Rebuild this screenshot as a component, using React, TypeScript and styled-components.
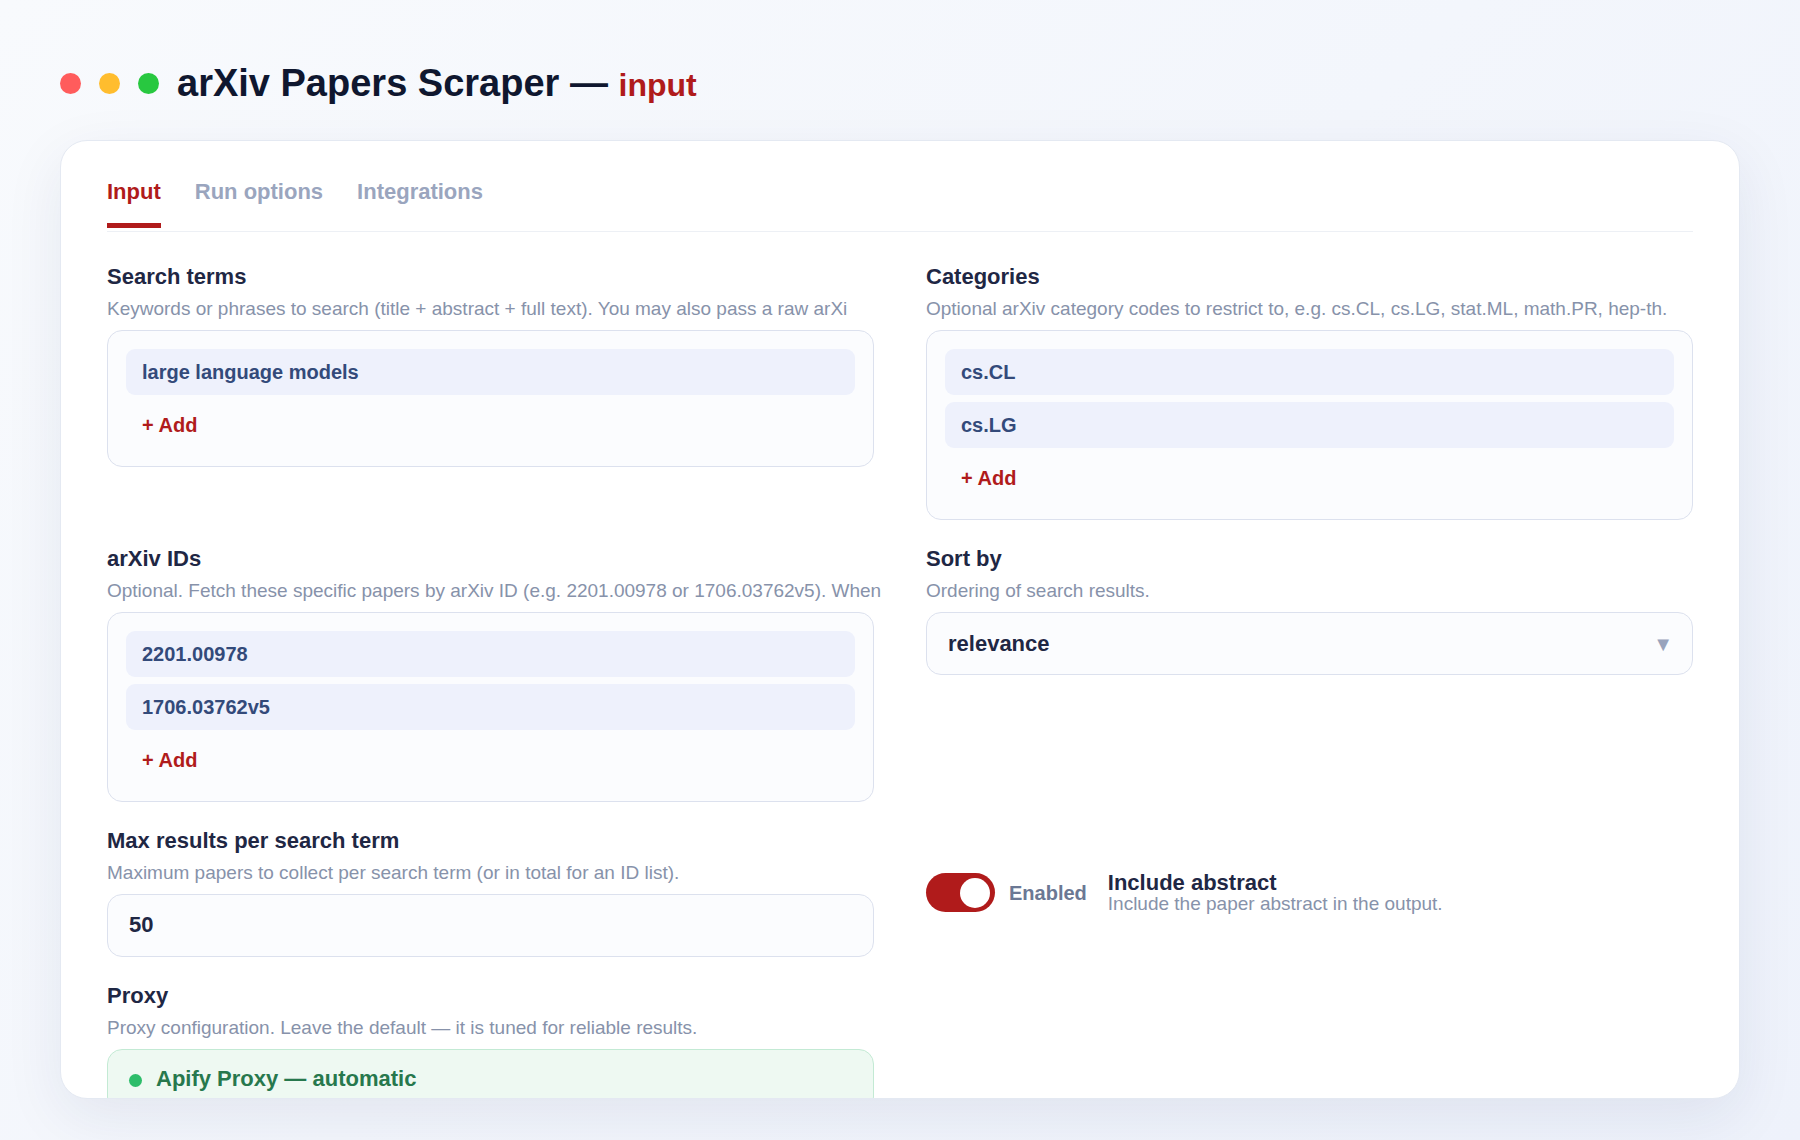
import React, { useState } from "react";
import styled, { createGlobalStyle, css } from "styled-components";

const GlobalStyle = createGlobalStyle`
  *, *::before, *::after { box-sizing: border-box; }
  body {
    margin: 0;
    font-family: "Liberation Sans", Arial, Helvetica, sans-serif;
    color: #1f2744;
  }
  button, input, select { font-family: inherit; margin: 0; }
`;

const Page = styled.div`
  height: 100vh;
  padding: 62px 60px 41px;
  display: flex;
  flex-direction: column;
  gap: 36px;
  background: linear-gradient(135deg, #f8fafd 0%, #eef2fb 100%);
`;

const Header = styled.header`
  display: flex;
  align-items: center;
  gap: 18px;
`;

const Dot = styled.span<{ $color: string; $size: number }>`
  flex: none;
  width: ${(p) => p.$size}px;
  height: ${(p) => p.$size}px;
  border-radius: 50%;
  background: ${(p) => p.$color};
`;

const Title = styled.h1`
  margin: 0;
  font-size: 38px;
  line-height: 42px;
  font-weight: 700;
  color: #0f172f;
`;

const TitleAccent = styled.span`
  font-size: 32px;
  line-height: 32px;
  color: #b01b1b;
`;

const Card = styled.main`
  flex: 1;
  min-height: 0;
  overflow: hidden;
  padding: 38px 46px 0;
  background: #fff;
  border: 1px solid #e4e9f2;
  border-radius: 27px;
  box-shadow: 0 18px 60px rgba(30, 41, 90, 0.08);
`;

const Tabs = styled.div`
  display: flex;
  gap: 34px;
  padding-bottom: 3px;
  border-bottom: 1px solid #edf0f5;
`;

const Tab = styled.button<{ $active?: boolean }>`
  padding: 0 0 18px;
  border: 0;
  border-bottom: 5px solid ${(p) => (p.$active ? "#b01b1b" : "transparent")};
  background: none;
  font-size: 22px;
  line-height: 26px;
  font-weight: 700;
  color: ${(p) => (p.$active ? "#b01b1b" : "#9aa5be")};
  cursor: pointer;
`;

const Form = styled.form`
  margin-top: 32px;
  display: grid;
  grid-template-columns: repeat(2, minmax(0, 1fr));
  gap: 26px 52px;
`;

const Field = styled.div`
  min-width: 0;
`;

const labelText = css`
  display: block;
  font-size: 22px;
  line-height: 26px;
  font-weight: 700;
  color: #1f2744;
`;

const Label = styled.label`
  ${labelText}
`;

const GroupLabel = styled.div`
  ${labelText}
`;

const Hint = styled.p`
  margin: 8px 0 10px;
  font-size: 19px;
  line-height: 22px;
  color: #8792aa;
  white-space: nowrap;
`;

const surface = css`
  border: 1px solid #dce1ee;
  border-radius: 15px;
  background: #fbfcfe;
`;

const List = styled.div`
  ${surface}
  display: flex;
  flex-direction: column;
  align-items: flex-start;
  gap: 7px;
  padding: 18px;
`;

const ListItem = styled.input`
  width: 100%;
  height: 46px;
  padding: 0 16px;
  border: 0;
  border-radius: 9px;
  background: #eef1fc;
  font-size: 20px;
  font-weight: 700;
  color: #334a7a;
`;

const AddButton = styled.button`
  height: 46px;
  padding: 0 16px;
  border: 0;
  background: none;
  font-size: 20px;
  font-weight: 700;
  color: #b01b1b;
  cursor: pointer;
`;

const ValueInput = styled.input`
  ${surface}
  display: block;
  width: 100%;
  height: 63px;
  padding: 0 21px 2px;
  font-size: 22px;
  font-weight: 700;
  color: #1f2744;
`;

const SelectBox = styled.div`
  ${surface}
  display: grid;
  align-items: center;
  height: 63px;
  overflow: hidden;
`;

const Select = styled.select`
  grid-area: 1 / 1;
  appearance: none;
  width: 100%;
  height: 100%;
  padding: 0 48px 0 21px;
  border: 0;
  background: none;
  font-size: 22px;
  font-weight: 700;
  color: #1f2744;
`;

const Caret = styled.span`
  grid-area: 1 / 1;
  justify-self: end;
  padding-right: 19px;
  font-size: 20px;
  line-height: 22px;
  color: #98a3bc;
  pointer-events: none;
`;

const ToggleRow = styled.div`
  display: flex;
  align-items: center;
`;

const Switch = styled.input`
  appearance: none;
  flex: none;
  display: flex;
  align-items: center;
  width: 69px;
  height: 39px;
  padding: 0 5px;
  border-radius: 20px;
  background: #c5ccda;
  cursor: pointer;

  &::before {
    content: "";
    width: 30px;
    height: 30px;
    border-radius: 50%;
    background: #fff;
  }

  &:checked {
    justify-content: flex-end;
    background: #b01b1b;
  }
`;

const SwitchState = styled.span`
  margin: 0 21px 0 14px;
  font-size: 20px;
  line-height: 22px;
  font-weight: 700;
  color: #6b7894;
`;

const ToggleLabel = styled.label`
  ${labelText}
  line-height: 22px;
`;

const ToggleHint = styled(Hint)`
  margin: 0;
  line-height: 20px;
`;

const ProxyBox = styled.div`
  display: flex;
  align-items: center;
  gap: 14px;
  height: 63px;
  padding: 0 21px;
  border: 1px solid #c3ead4;
  border-radius: 15px;
  background: #eef9f2;
`;

const ProxyText = styled.span`
  padding-bottom: 3px;
  font-size: 22px;
  line-height: 26px;
  font-weight: 700;
  color: #27784d;
`;

function ListField({ id, label, hint, values }: { id: string; label: string; hint: string; values: string[] }) {
  const [items, setItems] = useState(values);
  return (
    <Field role="group" aria-labelledby={id}>
      <GroupLabel id={id}>{label}</GroupLabel>
      <Hint>{hint}</Hint>
      <List>
        {items.map((value, i) => (
          <ListItem key={i} type="text" defaultValue={value} aria-label={`${label} ${i + 1}`} />
        ))}
        <AddButton type="button" onClick={() => setItems([...items, ""])}>+ Add</AddButton>
      </List>
    </Field>
  );
}

const TABS = ["Input", "Run options", "Integrations"];

export default function App() {
  const [tab, setTab] = useState(TABS[0]);
  const [abstract, setAbstract] = useState(true);

  return (
    <>
      <GlobalStyle />
      <Page>
        <Header>
          <Dot $size={21} $color="#ff5c5c" />
          <Dot $size={21} $color="#ffbd2e" />
          <Dot $size={21} $color="#28c840" />
          <Title>
            arXiv Papers Scraper — <TitleAccent>input</TitleAccent>
          </Title>
        </Header>
        <Card>
          <Tabs role="tablist">
            {TABS.map((name) => (
              <Tab
                key={name}
                type="button"
                role="tab"
                aria-selected={tab === name}
                $active={tab === name}
                onClick={() => setTab(name)}
              >
                {name}
              </Tab>
            ))}
          </Tabs>
          <Form>
            <ListField
              id="terms"
              label="Search terms"
              hint="Keywords or phrases to search (title + abstract + full text). You may also pass a raw arXi"
              values={["large language models"]}
            />
            <ListField
              id="categories"
              label="Categories"
              hint="Optional arXiv category codes to restrict to, e.g. cs.CL, cs.LG, stat.ML, math.PR, hep-th."
              values={["cs.CL", "cs.LG"]}
            />
            <ListField
              id="ids"
              label="arXiv IDs"
              hint="Optional. Fetch these specific papers by arXiv ID (e.g. 2201.00978 or 1706.03762v5). When"
              values={["2201.00978", "1706.03762v5"]}
            />
            <Field>
              <Label htmlFor="sort">Sort by</Label>
              <Hint>Ordering of search results.</Hint>
              <SelectBox>
                <Select id="sort" defaultValue="relevance">
                  <option value="relevance">relevance</option>
                </Select>
                <Caret aria-hidden="true">▼</Caret>
              </SelectBox>
            </Field>
            <Field>
              <Label htmlFor="max">Max results per search term</Label>
              <Hint>Maximum papers to collect per search term (or in total for an ID list).</Hint>
              <ValueInput id="max" type="text" inputMode="numeric" defaultValue="50" />
            </Field>
            <ToggleRow>
              <Switch
                id="abstract"
                type="checkbox"
                role="switch"
                checked={abstract}
                onChange={(e) => setAbstract(e.target.checked)}
              />
              <SwitchState>{abstract ? "Enabled" : "Disabled"}</SwitchState>
              <div>
                <ToggleLabel htmlFor="abstract">Include abstract</ToggleLabel>
                <ToggleHint>Include the paper abstract in the output.</ToggleHint>
              </div>
            </ToggleRow>
            <Field role="group" aria-labelledby="proxy">
              <GroupLabel id="proxy">Proxy</GroupLabel>
              <Hint>Proxy configuration. Leave the default — it is tuned for reliable results.</Hint>
              <ProxyBox>
                <Dot $size={13} $color="#2dbd6a" />
                <ProxyText>Apify Proxy — automatic</ProxyText>
              </ProxyBox>
            </Field>
          </Form>
        </Card>
      </Page>
    </>
  );
}
